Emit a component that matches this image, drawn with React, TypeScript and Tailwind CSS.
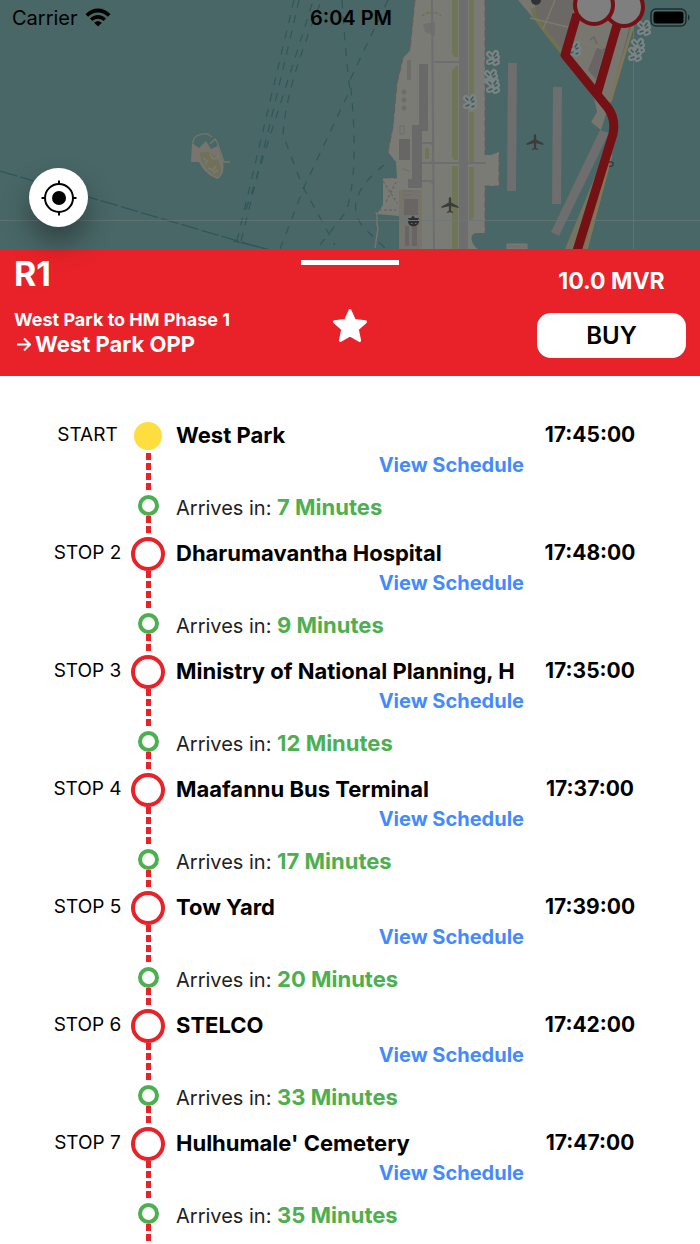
const stops = [
  { label: "START", name: "West Park", time: "17:45:00", minutes: 7 },
  { label: "STOP 2", name: "Dharumavantha Hospital", time: "17:48:00", minutes: 9 },
  { label: "STOP 3", name: "Ministry of National Planning, H", time: "17:35:00", minutes: 12 },
  { label: "STOP 4", name: "Maafannu Bus Terminal", time: "17:37:00", minutes: 17 },
  { label: "STOP 5", name: "Tow Yard", time: "17:39:00", minutes: 20 },
  { label: "STOP 6", name: "STELCO", time: "17:42:00", minutes: 33 },
  { label: "STOP 7", name: "Hulhumale' Cemetery", time: "17:47:00", minutes: 35 },
];

const Plane = ({ x, y }: { x: number; y: number }) => (
  <path
    transform={`translate(${x} ${y})`}
    fill="#3b3d3c"
    d="M0-8c.8 0 1.2 1 1.200 2v3.500L8.500 1.500V3L1.200 1.200 1 5.500 3.200 7.200V8L0 7.300-3.200 8v-.8L-1 5.500-1.200 1.200-8.500 3V1.500L-1.200-2.500V-6c0-1 .4-2 1.200-2z"
  />
);

const marks = "M-4-4l2 2M3-5l-2 3M4-1l-2 1M-4 4l3-1M4 4l-2 1";

const Moorings = ({ x, y }: { x: number; y: number }) => (
  <g transform={`translate(${x} ${y})`} strokeLinecap="round">
    <path d={marks} stroke="#798584" strokeWidth="6" />
    <path d={marks} stroke="#41575a" strokeWidth="1.500" />
  </g>
);

const RouteMap = () => (
  <svg
    className="absolute inset-0 h-full w-full"
    viewBox="0 0 700 249"
    preserveAspectRatio="xMidYMin slice"
    fill="none"
    aria-hidden="true"
  >
    <rect width="700" height="249" fill="#496767" />
    {/* ferry lines */}
    <g stroke="#2f575a" strokeWidth="1.200" strokeDasharray="8 8">
      <path d="M294 0Q268 110 235 249" />
      <path d="M299 0Q274 110 239 249" />
      <path d="M312 4Q282 100 244 216" />
      <path d="M320 4Q285 90 283 135L302 185 335 245" />
      <path d="M342 0Q346 60 350 90L305 185 280 249" />
      <path d="M388 0L350 80Q360 170 346 212L320 245" />
      <path d="M384 165Q340 200 364 228L386 249" />
    </g>
    <path d="M0 171L265 249" stroke="#2f575a" strokeWidth="1.300" strokeDasharray="18 3" />
    <path d="M233 241l35 8" stroke="#2f575a" />
    {/* small island */}
    <path d="M192 143l7 5 7-7 5 8 7-3 5 15c1 8 1 15-6 18-10-4-15-11-18-17h-8z" fill="#77756e" />
    <path d="M200 153c7-3 15 0 19 9 3 6 3 13-1 15-8-1-18-15-18-24z" fill="#6f7258" />
    <path d="M203 158l4 3-2 4M210 154l3 5 4-1M208 168l5 2 3-4M213 173l5-3" stroke="#7d7a73" strokeWidth="1.500" />
    <path d="M193 143c0-7 7-10 15-9l4 3M210 144l5-5 2 3 5 14 2 6h6" stroke="#77756e" strokeWidth="1.300" />

    {/* airport island */}
    <path
      d="M415 0H485V155H491L499 152V186H485V233H476C468 235 472 245 478 249H400L399 216 377 214 383 205 383 178 397 178 396 162 388 152 393 127 397 84 403 58 410 50Z"
      fill="#7b7b75"
    />
    <path
      d="M415 0L410 50 403 58 397 84 393 127 388 152M485 0V155M499 155V186H485V240M383 178H397"
      stroke="#6a5c5b"
      strokeDasharray="7 3"
    />
    <path d="M383 181l14 22M386 202l10-20M379 210h17" stroke="#646b62" strokeWidth="1.500" strokeDasharray="3 2" />
    <path d="M376 212c3 6-1 10 2 16l-3 20" stroke="#757570" strokeWidth="1.500" />
    <path d="M399 190h23v59h-23z" fill="#75736e" />
    <path d="M401 190v59M421 190v59" stroke="#7a785f" strokeWidth="1.500" strokeDasharray="12 2" />
    <path d="M404 199h14v16h-14zM405 226h4v20h-4zM412 226h5v20h-5z" fill="#696564" />
    <path d="M399 139h11v21h-11z" fill="#686665" />
    <path d="M423 24l12-2v14l-10-4z" fill="#70716f" />
    <path d="M422 16c5-5 10-4 14-2M430 13c6-1 8 0 11 3" stroke="#6c7055" strokeWidth="1.500" strokeDasharray="3 2" />
    <path d="M419 64h9v67h-9zM412 125h10v63h-14v-9h4z" fill="#686968" />
    <path d="M407 60h4v20h-4z" fill="#6d6d6a" />
    <g fill="#6d6d6a">
      <circle cx="404" cy="92" r="2.500" />
      <circle cx="404" cy="100" r="2.500" />
      <circle cx="404" cy="108" r="2.500" />
    </g>
    <path d="M400 126h4v8h-4zM402 168l8 4M403 191h10M403 195h8" stroke="#6d6d6a" />
    <path d="M432 0L434 249M434 62h26M422 143h8q3 0 3 3v14q0 3-3 3h-8M422 163h64M422 181h8q3 0 3 3" stroke="#6d6e70" strokeWidth="2" />
    <path d="M425 148h4v11h-4z" fill="#6f7658" />
    <path
      d="M452 0h6v57h-4l-2-5zM452 71l4-5h2v94h-4l-2-4zM452 166h6v83h-6zM469 0h5v102h-5zM469 112h5v50h-5zM469 167h5v48l-2 5h-3z"
      fill="#6f7656"
    />
    <path d="M459 0h9v249h-9z" fill="#6e6e6e" />
    <path d="M508 63h9l-1 128h-9zM553 87h9l-1 117h-9z" fill="#6e6e6e" />

    {/* Hulhumale side */}
    <path d="M518 0H637L607 111 601 130 591 122 597 112 594 98 563 55 535 20Z" fill="#77766f" />
    <path d="M534 0h42l-14 52-25-32z" fill="#6b6866" />
    <path d="M597 48h8l-9 31-8-9z" fill="#686564" />
    <path d="M533 8c1 12 12 22 31 47" stroke="#6f724f" strokeWidth="4" />
    <path d="M530 18l42 10M555 0l-12 29M583 30l-4 11 24 8M610 45l-15 50" stroke="#7c7a6c" strokeWidth="1.500" />
    <path d="M590 40l4-3 3 7M612 40l-2 7M616 36l6-9M606 68l8-26" stroke="#696763" strokeWidth="1.500" />
    <path d="M633 25L610 102" stroke="#7d7757" strokeWidth="3" />
    <path d="M637 25L612 104" stroke="#6a5c5b" strokeDasharray="4 3" />
    <path d="M608 145L565 249H588L613 150Z" fill="#777361" />
    <path d="M600 130l9 3-50 103-8-4z" fill="#6e6e6e" />
    <path d="M611 155L586 249" stroke="#7d7757" strokeWidth="3" />
    <path d="M507 244h20v5h-20z" fill="#75736e" stroke="#7d7b77" />
    <circle cx="536" cy="0" r="5" fill="#2f3333" />
    <path d="M609 162q5-1 4 3-1 2-4 1" stroke="#323737" strokeWidth="1.300" />
    <path d="M0 220.500H700M633.500 0V249" stroke="#6b7777" strokeOpacity="0.700" />

    <Moorings x={493} y={58} />
    <Moorings x={491} y={77} />
    <Moorings x={493} y={86} />
    <Moorings x={470} y={102} />
    <Moorings x={644} y={28} />
    <Moorings x={638} y={46} />
    <Moorings x={635} y={54} />
    <Moorings x={574} y={49} />
    <Plane x={535} y={142} />
    <Plane x={450} y={205} />
    <path d="M408 218h3l2-2.500 2 2.500h4l-1 2h-9zM408 221h11c0 7-11 7-11 0z" fill="#2d302f" />
    <path d="M411 223.500h1.500M415 223.500h1.500" stroke="#6f6d68" />

    {/* bus route */}
    <g stroke="#751015" strokeWidth="9" strokeLinejoin="round">
      <path d="M577 14L565 55 608 108Q616 119 613 134L577 251" />
      <path d="M617 25L597 94" />
    </g>
    <g fill="#7f7f7f" stroke="#751015" strokeWidth="4">
      <circle cx="624" cy="7" r="19" />
      <circle cx="594" cy="5" r="19" />
    </g>
  </svg>
);

const StatusBar = () => (
  <div className="relative flex h-9 items-center justify-between pr-[10px] pl-3 text-xl text-black">
    <div className="flex flex-1 items-center gap-[7px]">
      <span>Carrier</span>
      <svg className="mb-[2px]" width="26" height="19" viewBox="0 0 26 19" aria-hidden="true">
        <path d="M0.500 6.200C7.500-1.400 18.500-1.400 25.500 6.200L22.900 8.800C17.400 3 8.600 3 3.100 8.800Z" />
        <path d="M4.900 10.500C9.500 5.700 16.500 5.700 21.100 10.500L18.500 13.100C15.400 9.900 10.600 9.900 7.500 13.100Z" />
        <path d="M9.200 14.800C11.400 12.700 14.600 12.700 16.800 14.800L13 18.600Z" />
      </svg>
    </div>
    <span className="font-semibold">6:04 PM</span>
    <div className="flex flex-1 justify-end">
      <svg className="mb-[2px]" width="40" height="19" viewBox="0 0 40 19" fill="none" aria-hidden="true">
        <rect x="1" y="1" width="35" height="17" rx="5" stroke="#1f2c2c" strokeWidth="1.500" />
        <rect x="3.500" y="3.500" width="30" height="12" rx="2.500" fill="#000" />
        <path d="M38 6.500c2 1 2 5 0 6z" fill="#1f2c2c" />
      </svg>
    </div>
  </div>
);

const Dashes = ({ count }: { count: number }) => (
  <div className="flex flex-col gap-[3px]">
    {Array.from({ length: count }, (_, i) => (
      <div key={i} className="h-[7px] w-[5px] bg-[#e92229]" />
    ))}
  </div>
);

const App = () => {
  return (
    <div className="flex min-h-screen flex-col bg-white font-['Inter',sans-serif] text-black">
      <div className="relative h-[249px] shrink-0 overflow-hidden">
        <RouteMap />
        <StatusBar />
      </div>

      <header className="relative flex h-[127px] shrink-0 bg-[#e92229] px-[14px] text-white">
        <button
          type="button"
          aria-label="My location"
          className="absolute -top-[81px] left-[29px] flex h-[59px] w-[59px] items-center justify-center rounded-full bg-white text-black shadow-[0_16px_28px_rgba(0,0,0,0.35)]"
        >
          <svg width="36" height="36" viewBox="0 0 36 36" fill="none" stroke="currentColor" strokeWidth="2" aria-hidden="true">
            <circle cx="18" cy="18" r="14" />
            <circle cx="18" cy="18" r="7" fill="currentColor" stroke="none" />
            <path d="M18 0.500V4M18 32v3.500M0.500 18H4M32 18h3.500" />
          </svg>
        </button>
        <div className="flex-1 pt-2">
          <h1 className="text-[34px] leading-[34px] font-bold">R1</h1>
          <p className="mt-[17px] text-lg leading-6 font-bold">West Park to HM Phase 1</p>
          <p className="flex items-center gap-1 text-[22px] leading-6 font-bold">
            <svg className="ml-[3px]" width="14" height="14" viewBox="0 0 14 14" fill="none" stroke="currentColor" strokeWidth="2" aria-hidden="true">
              <path d="M0 7.500H13M7 1.500L13 7.500 7 13.500" />
            </svg>
            West Park OPP
          </p>
        </div>
        <div className="flex w-[98px] flex-col items-center pt-[11px]">
          <div className="h-[5px] w-full bg-white" />
          <button type="button" aria-label="Add to favourites" className="mt-[43px]">
            <svg width="36" height="36" viewBox="0 0 36 36" fill="currentColor" stroke="currentColor" strokeWidth="3" strokeLinejoin="round" aria-hidden="true">
              <path d="M18 2.500L22.500 12.600 33.500 13.800 25.300 21.200 27.600 32.500 18 26.900 8.400 32.500 10.700 21.200 2.500 13.800 13.500 12.600Z" />
            </svg>
          </button>
        </div>
        <div className="flex flex-1 flex-col items-end pt-[18px]">
          <div className="flex w-[149px] flex-col items-center">
            <span className="text-[23px] leading-7 font-bold">10.0 MVR</span>
            <button type="button" className="mt-[18px] h-[45px] w-full rounded-[14px] bg-white text-2xl font-semibold text-black">
              BUY
            </button>
          </div>
        </div>
      </header>

      <ol className="px-11 pt-[43px]">
        {stops.map((stop, index) => (
          <li key={stop.label} className="grid grid-cols-[87px_34px_1fr_132px]">
            <span className="text-center text-[19px] leading-8">{stop.label}</span>
            <div className="flex flex-col items-center pb-1">
              <div className="flex h-[34px] w-[34px] items-center justify-center">
                {index == 0 ? (
                  <div className="h-7 w-7 rounded-full bg-[#fedd3f]" />
                ) : (
                  <div className="h-full w-full rounded-full border-4 border-[#e92229]" />
                )}
              </div>
              <Dashes count={4} />
              <div className="mt-[5px] h-[21px] w-[21px] rounded-full border-4 border-[#4caf50]" />
              <Dashes count={2} />
            </div>
            <div className="min-w-0 pl-[11px]">
              <h2 className="overflow-hidden text-[22px] leading-8 font-bold whitespace-nowrap">{stop.name}</h2>
              <a href="#schedule" className="block text-right text-xl leading-7 font-bold text-[#448aff]">
                View Schedule
              </a>
              <p className="mt-[14px] text-xl leading-7 text-[#212121]">
                Arrives in: <span className="text-[22px] font-bold text-[#4caf50]">{stop.minutes} Minutes</span>
              </p>
            </div>
            <time className="text-center text-[21px] leading-8 font-bold">{stop.time}</time>
          </li>
        ))}
      </ol>
    </div>
  );
};
export default App;
